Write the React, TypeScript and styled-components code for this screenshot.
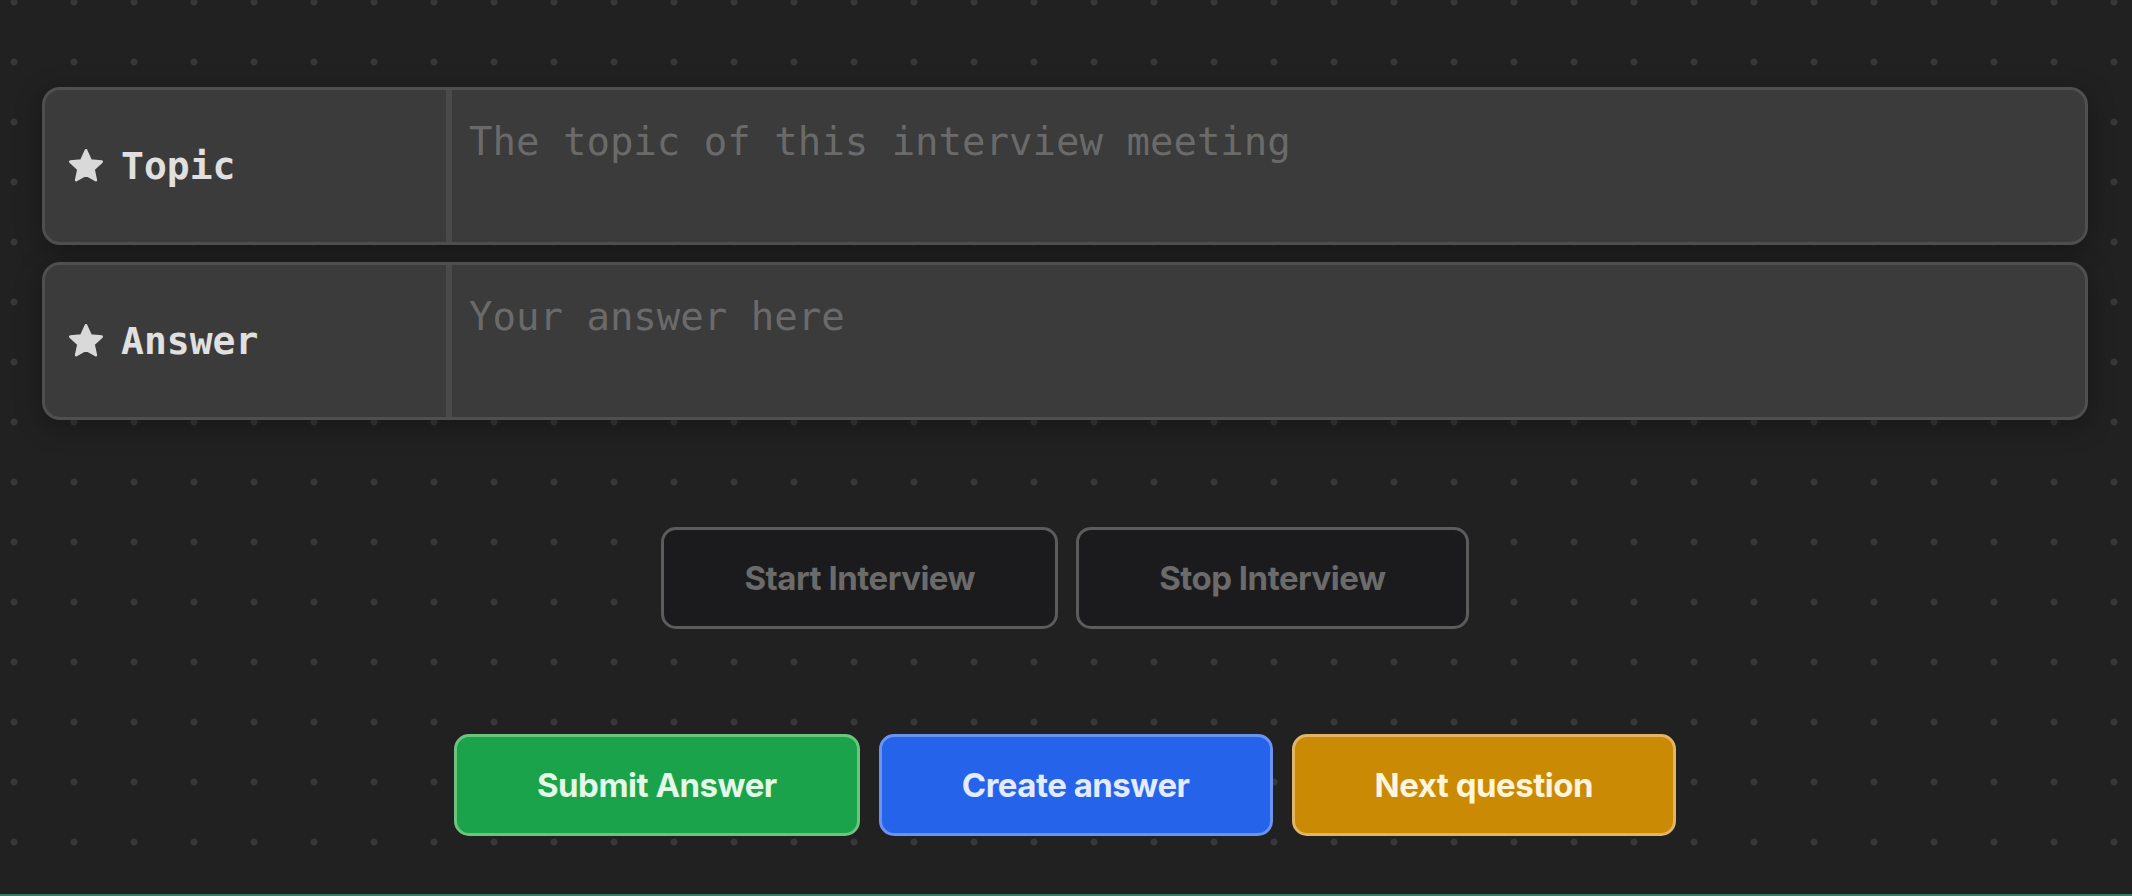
import styled, { createGlobalStyle } from 'styled-components';

const GlobalStyle = createGlobalStyle`
  html, body {
    margin: 0;
    padding: 0;
    background: #212121;
  }
  * {
    box-sizing: border-box;
  }
`;

const Page = styled.div`
  min-height: 100vh;
  display: flex;
  flex-direction: column;
  align-items: stretch;
  padding: 87px 44px 0 42px;
  background-color: #212121;
  background-image: radial-gradient(circle, #373737 3px, transparent 4px);
  background-size: 60px 60px;
  background-position: -16px -28px;
  border-bottom: 2px solid #3a7a68;
`;

const Fields = styled.div`
  display: flex;
  flex-direction: column;
  gap: 17px;
`;

const Field = styled.div`
  display: flex;
  height: 158px;
  background: #3b3b3b;
  border: 3px solid #4f4f4f;
  border-radius: 18px;
  overflow: hidden;
  box-shadow: 0 6px 28px rgba(0, 0, 0, 0.3);
`;

const Label = styled.label`
  width: 407px;
  flex-shrink: 0;
  display: flex;
  align-items: center;
  gap: 15px;
  padding-left: 21px;
  border-right: 6px solid #4a4a4a;
  font-family: 'DejaVu Sans Mono', monospace;
  font-weight: 700;
  font-size: 38px;
  color: #e0e0e0;
`;

const Input = styled.textarea`
  flex: 1;
  background: transparent;
  border: none;
  outline: none;
  resize: none;
  padding: 29px 17px;
  font-family: 'DejaVu Sans Mono', monospace;
  font-size: 39px;
  line-height: 1.2;
  color: #e0e0e0;

  &::placeholder {
    color: #6a6a6a;
  }
`;

const ButtonRow = styled.div<{ $top: number; $gap: number }>`
  display: flex;
  justify-content: center;
  gap: ${p => p.$gap}px;
  margin-top: ${p => p.$top}px;
`;

const tones = {
  dark: { bg: '#1b1b1d', border: '#5c5c5c', text: '#6b6b6b' },
  green: { bg: '#1aa34a', border: '#6cc47f', text: '#e3f8e6' },
  blue: { bg: '#2563eb', border: '#6b93f2', text: '#e3ebff' },
  amber: { bg: '#ca8a04', border: '#e2b565', text: '#fff4dc' },
};

type Tone = keyof typeof tones;

const Button = styled.button<{ $tone: Tone }>`
  height: 102px;
  padding: 0 80px;
  border: 3px solid ${p => tones[p.$tone].border};
  border-radius: 15px;
  background: ${p => tones[p.$tone].bg};
  color: ${p => tones[p.$tone].text};
  font-family: Inter, 'Noto Sans', sans-serif;
  font-weight: 700;
  font-size: 33px;
  letter-spacing: -0.5px;
  cursor: pointer;
`;

function Star() {
  return (
    <svg width='40' height='40' viewBox='0 0 24 24' aria-hidden='true'>
      <path
        d='M12 2.6l2.8 6.1 6.6.7-4.9 4.5 1.4 6.6L12 17.2l-5.9 3.3 1.4-6.6-4.9-4.5 6.6-.7z'
        fill='#d9d9d9'
        stroke='#d9d9d9'
        strokeWidth='1.6'
        strokeLinejoin='round'
      />
    </svg>
  );
}

export default function App() {
  return (
    <Page>
      <GlobalStyle />
      <Fields>
        <Field>
          <Label>
            <Star />
            Topic
          </Label>
          <Input placeholder='The topic of this interview meeting' />
        </Field>
        <Field>
          <Label>
            <Star />
            Answer
          </Label>
          <Input placeholder='Your answer here' />
        </Field>
      </Fields>

      <ButtonRow $top={107} $gap={18}>
        <Button $tone='dark'>Start Interview</Button>
        <Button $tone='dark'>Stop Interview</Button>
      </ButtonRow>

      <ButtonRow $top={105} $gap={19}>
        <Button $tone='green'>Submit Answer</Button>
        <Button $tone='blue'>Create answer</Button>
        <Button $tone='amber'>Next question</Button>
      </ButtonRow>
    </Page>
  );
}
